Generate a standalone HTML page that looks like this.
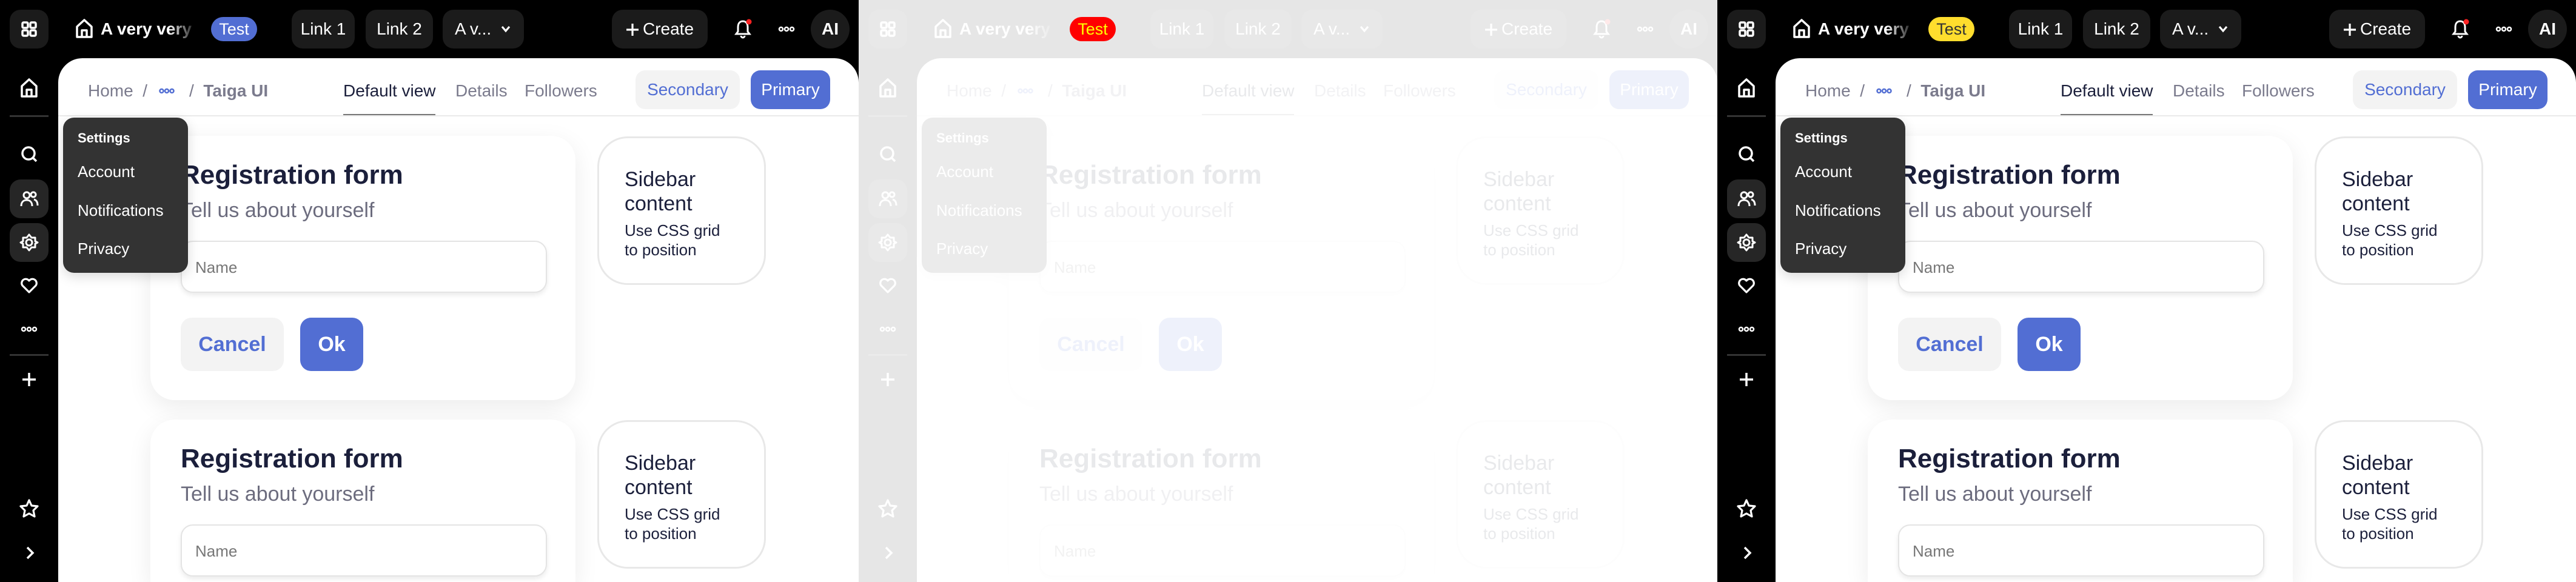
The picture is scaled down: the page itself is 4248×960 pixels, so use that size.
<!DOCTYPE html>
<html><head><meta charset="utf-8"><style>
*{box-sizing:border-box;margin:0;padding:0}
html,body{width:4248px;height:960px;overflow:hidden;background:#000;font-family:"Liberation Sans",sans-serif}
.p{position:absolute;top:0;width:1416px;height:960px;background:#000;overflow:hidden}
.a{position:absolute}
.tb{position:absolute;top:16px;height:64px;background:#1b1b1b;border-radius:18px;color:#fff;font-size:28px;line-height:64px;text-align:center}
.sb{position:absolute;left:16px;width:64px;height:64px;background:#262626;border-radius:18px}
.ic{position:absolute;left:32px}
.main{position:absolute;left:96px;top:96px;width:1320px;height:864px;background:#fff;border-radius:40px 40px 0 0;overflow:hidden}
.t{position:absolute;font-size:28px;line-height:32px;white-space:nowrap}
.card{position:absolute;background:#fff;border-radius:40px;box-shadow:0 12px 40px rgba(0,0,0,.08)}
.side{position:absolute;border:3px solid #e8e8e8;border-radius:50px;background:#fff}
.inp{position:absolute;left:50px;width:604px;height:86px;border:2px solid #e4e4e4;border-radius:20px;box-shadow:0 4px 8px rgba(0,0,0,.08);background:#fff}
.ov{position:absolute;inset:0;background:rgba(255,255,255,.9);z-index:5}
</style></head><body>

<div class="p" style="left:0" id="p1"></div>
<div class="p" style="left:1416px" id="p2"></div>
<div class="p" style="left:2832px" id="p3"></div>

<template id="tp">
<div class="tb" style="left:16px;width:64px"><svg width="64" height="64" viewBox="0 0 64 64"><g fill="none" stroke="#fff" stroke-width="3.5"><rect x="21" y="21" width="9" height="9" rx="2"/><rect x="34" y="21" width="9" height="9" rx="2"/><rect x="21" y="34" width="9" height="9" rx="2"/><rect x="34" y="34" width="9" height="9" rx="2"/></g></svg></div>
<svg class="a" style="left:124px;top:30px" width="30" height="34" viewBox="0 0 30 34"><path d="M3 14L15 3l12 11v17H3z M11 31V20h8v11" fill="none" stroke="#fff" stroke-width="3.5" stroke-linejoin="round"/></svg>
<div class="t" style="left:166px;top:32px;color:#fff;font-weight:bold;font-size:28px;-webkit-mask:linear-gradient(90deg,#000 70%,transparent);width:160px;overflow:hidden">A very very</div>
<div class="a badge" style="left:348px;top:28px;width:76px;height:40px;border-radius:20px;font-size:27px;line-height:40px;text-align:center;z-index:6">Test</div>
<div class="tb" style="left:481px;width:104px">Link 1</div>
<div class="tb" style="left:603px;width:111px">Link 2</div>
<div class="tb" style="left:730px;width:134px;text-align:left;padding-left:20px">A v...<svg style="position:absolute;left:94px;top:24px" width="20" height="16" viewBox="0 0 20 16"><path d="M4 4l6 7 6-7" fill="none" stroke="#fff" stroke-width="3.2"/></svg></div>
<div class="tb" style="left:1009px;width:158px"><svg style="vertical-align:-3px;margin-right:6px" width="22" height="22" viewBox="0 0 22 22"><path d="M11 1v20M1 11h20" stroke="#fff" stroke-width="3.2"/></svg>Create</div>
<svg class="a" style="left:1208px;top:30px" width="36" height="36" viewBox="0 0 36 36"><path d="M17 5c-6 0-8 5-8 10v7l-3 4h22l-3-4v-7c0-5-2-10-8-10zM14 29a3 3 0 0 0 6 0" fill="none" stroke="#fff" stroke-width="3"/><circle cx="27" cy="6" r="4.5" fill="#f22"/></svg>
<svg class="a" style="left:1283px;top:43px" width="28" height="10" viewBox="0 0 28 10"><g fill="none" stroke="#fff" stroke-width="2.5"><circle cx="5" cy="5" r="3"/><circle cx="14" cy="5" r="3"/><circle cx="23" cy="5" r="3"/></g></svg>
<div class="tb" style="left:1337px;width:64px;border-radius:32px;font-weight:bold">AI</div>

<svg class="ic" style="top:128px" width="32" height="34" viewBox="0 0 32 34"><path d="M4 14L16 3l12 11v17H4z M12 31V20h8v11" fill="none" stroke="#fff" stroke-width="3.5" stroke-linejoin="round"/></svg>
<div class="a" style="left:16px;top:190px;width:64px;height:3px;background:#333"></div>
<svg class="ic" style="top:238px" width="32" height="34" viewBox="0 0 32 34"><circle cx="15" cy="15" r="10" fill="none" stroke="#fff" stroke-width="3.5"/><path d="M22 22l6 6" stroke="#fff" stroke-width="3.5"/></svg>
<div class="sb" style="top:296px"></div>
<svg class="ic" style="top:312px" width="32" height="32" viewBox="0 0 32 32"><g fill="none" stroke="#fff" stroke-width="3"><circle cx="12" cy="10" r="5"/><path d="M3 28c0-7 4-10 9-10s9 3 9 10"/><circle cx="23" cy="9" r="4"/><path d="M24 17c4 1 6 4 6 10"/></g></svg>
<div class="sb" style="top:368px"></div>
<svg class="ic" style="top:384px" width="32" height="32" viewBox="0 0 32 32"><g fill="none" stroke="#fff" stroke-width="3"><circle cx="16" cy="16" r="5"/><path d="M16 3l4 5 6 0 0 6 4 2-4 2 0 6-6 0-4 5-4-5-6 0 0-6-4-2 4-2 0-6 6 0z" stroke-linejoin="round"/></g></svg>
<svg class="ic" style="top:454px" width="32" height="32" viewBox="0 0 32 32"><path d="M16 28L5 17a6.5 6.5 0 0 1 11-8 6.5 6.5 0 0 1 11 8z" fill="none" stroke="#fff" stroke-width="3.2" stroke-linejoin="round"/></svg>
<svg class="a" style="left:34px;top:538px" width="28" height="10" viewBox="0 0 28 10"><g fill="none" stroke="#fff" stroke-width="2.5"><circle cx="5" cy="5" r="3"/><circle cx="14" cy="5" r="3"/><circle cx="23" cy="5" r="3"/></g></svg>
<div class="a" style="left:16px;top:584px;width:64px;height:3px;background:#333"></div>
<svg class="ic" style="top:610px" width="32" height="32" viewBox="0 0 32 32"><path d="M16 5v22M5 16h22" stroke="#fff" stroke-width="3.5"/></svg>
<svg class="ic" style="top:822px" width="32" height="34" viewBox="0 0 32 34"><path d="M16 3l4 9 10 1-7 7 2 10-9-5-9 5 2-10-7-7 10-1z" fill="none" stroke="#fff" stroke-width="3.2" stroke-linejoin="round"/></svg>
<svg class="ic" style="top:896px" width="32" height="32" viewBox="0 0 32 32"><path d="M13 7l9 9-9 9" fill="none" stroke="#fff" stroke-width="3.5"/></svg>

<div class="main">
 <div class="t" style="left:49px;top:38px;color:#7b7b8d">Home &nbsp;/</div>
 <svg class="a" style="left:166px;top:49px" width="26" height="10" viewBox="0 0 26 10"><g fill="none" stroke="#526ed3" stroke-width="2.5"><circle cx="4.5" cy="5" r="3"/><circle cx="13" cy="5" r="3"/><circle cx="21.5" cy="5" r="3"/></g></svg>
 <div class="t" style="left:216px;top:38px;color:#7b7b8d">/ &nbsp;<b>Taiga UI</b></div>
 <div class="t" style="left:470px;top:38px;color:#1b1f3b">Default view</div>
 <div class="a" style="left:470px;top:92px;width:152px;height:4px;background:#777"></div>
 <div class="t" style="left:655px;top:38px;color:#7b7b8d">Details</div>
 <div class="t" style="left:769px;top:38px;color:#7b7b8d">Followers</div>
 <div class="a" style="left:0;top:94px;width:1320px;height:2px;background:#eaeaea"></div>
 <div class="a" style="left:952px;top:20px;width:172px;height:64px;background:#f3f3f3;border-radius:16px;color:#526ed3;font-size:28px;line-height:64px;text-align:center">Secondary</div>
 <div class="a" style="left:1142px;top:20px;width:131px;height:64px;background:#526ed3;border-radius:16px;color:#fff;font-size:28px;line-height:64px;text-align:center">Primary</div>

 <div class="card" style="left:152px;top:128px;width:701px;height:436px">
  <div class="t" style="left:50px;top:40px;font-size:44px;line-height:50px;font-weight:bold;color:#1b1f3b">Registration form</div>
  <div class="t" style="left:50px;top:103px;font-size:34px;line-height:40px;color:#6c6c7e">Tell us about yourself</div>
  <div class="inp" style="top:173px"><div class="t" style="left:22px;top:26px;font-size:26px;color:#777">Name</div></div>
  <div class="a" style="left:50px;top:300px;width:170px;height:88px;background:#f3f3f3;border-radius:18px;color:#526ed3;font-size:34px;font-weight:bold;line-height:88px;text-align:center">Cancel</div>
  <div class="a" style="left:247px;top:300px;width:104px;height:88px;background:#526ed3;border-radius:18px;color:#fff;font-size:34px;font-weight:bold;line-height:88px;text-align:center">Ok</div>
 </div>
 <div class="side" style="left:889px;top:129px;width:278px;height:245px">
  <div class="t" style="left:42px;top:48px;font-size:34px;line-height:40px;color:#1b1f3b">Sidebar<br>content</div>
  <div class="t" style="left:42px;top:136px;font-size:26px;line-height:32px;color:#1b1f3b">Use CSS grid<br>to position</div>
 </div>

 <div class="card" style="left:152px;top:596px;width:701px;height:268px;border-radius:40px 40px 0 0">
  <div class="t" style="left:50px;top:40px;font-size:44px;line-height:50px;font-weight:bold;color:#1b1f3b">Registration form</div>
  <div class="t" style="left:50px;top:103px;font-size:34px;line-height:40px;color:#6c6c7e">Tell us about yourself</div>
  <div class="inp" style="top:173px"><div class="t" style="left:22px;top:26px;font-size:26px;color:#777">Name</div></div>
 </div>
 <div class="side" style="left:889px;top:597px;width:278px;height:245px">
  <div class="t" style="left:42px;top:48px;font-size:34px;line-height:40px;color:#1b1f3b">Sidebar<br>content</div>
  <div class="t" style="left:42px;top:136px;font-size:26px;line-height:32px;color:#1b1f3b">Use CSS grid<br>to position</div>
 </div>

 <div class="a" style="left:8px;top:98px;width:206px;height:256px;background:#333;border-radius:18px;box-shadow:0 6px 20px rgba(0,0,0,.15)">
  <div class="t" style="left:24px;top:18px;font-size:22px;font-weight:bold;color:#fff">Settings</div>
  <div class="t" style="left:24px;top:73px;font-size:26px;color:#fff">Account</div>
  <div class="t" style="left:24px;top:137px;font-size:26px;color:#fff">Notifications</div>
  <div class="t" style="left:24px;top:200px;font-size:26px;color:#fff">Privacy</div>
 </div>
</div>
</template>
<script>
var tp=document.getElementById('tp').innerHTML;
['p1','p2','p3'].forEach(function(id,i){
 var p=document.getElementById(id);p.innerHTML=tp+(i==1?'<div class="ov"></div>':'');
 var b=p.querySelector('.badge');
 if(i==0){b.style.background='#526ed3';b.style.color='#fff'}
 if(i==1){b.style.background='#f00';b.style.color='#ff0'}
 if(i==2){b.style.background='#ffdd2d';b.style.color='#333'}
});
</script>
</body></html>
